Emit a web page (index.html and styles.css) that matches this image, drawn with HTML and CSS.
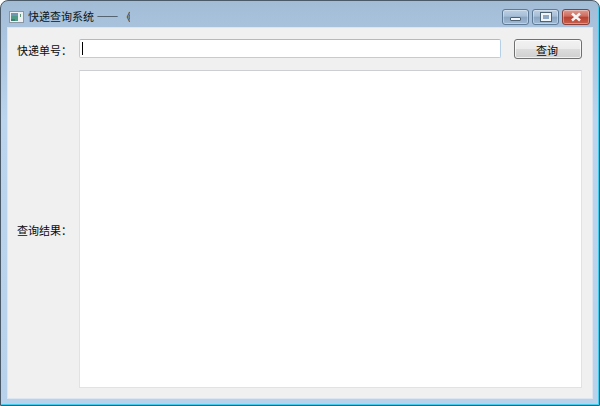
FILE: index.html
```html
<!DOCTYPE html>
<html lang="zh">
<head>
<meta charset="utf-8">
<title>快递查询系统</title>
<link rel="stylesheet" href="styles.css">
</head>
<body>
<div class="window">
  <header class="titlebar">
    <svg class="app-icon" width="15" height="12" viewBox="0 0 15 12">
      <rect x="0.5" y="0.5" width="14" height="11" fill="#eef1f3" stroke="#8a96a2"/>
      <rect x="2" y="2" width="7" height="8" fill="#4f9a86"/>
      <rect x="2" y="2" width="7" height="3" fill="#6f94b4"/>
      <rect x="2" y="8" width="4" height="2" fill="#3c7f70"/>
      <rect x="11" y="3" width="1" height="3" fill="#5f9078"/>
    </svg>
    <div class="title">快递查询系统 —— 《快递查询系统》</div>
    <div class="caption-buttons">
      <div class="cap cap-min"><span class="glyph-min"></span></div>
      <div class="cap cap-max"><span class="glyph-max"></span></div>
      <div class="cap cap-close">
        <svg width="14" height="10" viewBox="0 0 14 10"><path d="M3 1.5 L11 8.5 M11 1.5 L3 8.5" stroke="#f4f4f4" stroke-width="2.6" fill="none"/></svg>
      </div>
    </div>
  </header>
  <main class="client">
    <label class="label">快递单号：</label>
    <div class="input"><span class="caret"></span></div>
    <button class="button">查询</button>
    <label class="label">查询结果：</label>
    <div class="result"></div>
  </main>
</div>
</body>
</html>
```
FILE: styles.css
```css
html, body { margin: 0; padding: 0; }
body { width: 600px; height: 406px; overflow: hidden; background: #fff; font-family: "Noto Sans CJK SC", "Liberation Sans", sans-serif; font-size: 11px; color: #0a0a0a; }
.window {
  box-sizing: border-box; width: 600px; height: 406px;
  display: flex; flex-direction: column;
  border: 1px solid #4a5a68;
  border-radius: 8px 8px 0 0;
  background: linear-gradient(180deg, #a3bcd6 0, #a9c3de 30px, #bcd5ee 120px, #b9d2ec 100%);
  box-shadow: inset -1px -1px 0 #45cdf0;
  padding: 0 7px 7px;
}
.titlebar { height: 27px; flex: none; display: flex; align-items: center; }
.app-icon { margin: 4px 4px 0 1px; flex: none; }
.title { width: 102px; margin-top: 3px; overflow: hidden; white-space: nowrap; color: #0c1520; }
.caption-buttons { margin-left: auto; margin-top: 4px; display: flex; gap: 3px; margin-right: 2px; }
.cap { height: 16px; box-sizing: border-box; border: 1px solid #5d7a96; border-radius: 3px; display: flex; align-items: center; justify-content: center; background: linear-gradient(180deg, #bcd0e4 0, #a5bdd6 45%, #8aa5c2 50%, #a0bad4 100%); box-shadow: inset 0 0 0 1px rgba(255,255,255,.35); }
.cap-min { width: 27px; }
.cap-max { width: 27px; }
.cap-close { width: 28px; border-color: #8a4038; background: linear-gradient(180deg, #dc9a8e 0, #cf6a5c 45%, #b8402f 50%, #c8604e 100%); }
.glyph-min { width: 11px; height: 4px; margin-top: 5px; box-sizing: border-box; background: #f2f5f8; border: 1px solid #4e6276; border-radius: 1px; }
.glyph-max { width: 10px; height: 8px; box-sizing: border-box; background: #8fa9c4; border: 2px solid #f2f5f8; outline: 1px solid #4e6276; }
.client {
  flex: 1; box-sizing: border-box;
  display: grid; grid-template-columns: 62px 422px 13px 68px; grid-template-rows: 20px 318px; row-gap: 11px;
  align-items: center;
  padding: 11px 10px 10px 9px;
  background: #f0f0f0;
  box-shadow: 0 0 0 1px #dce6f0;
}
.label { white-space: nowrap; padding-top: 1px; }
.input { grid-column: 2; height: 19px; align-self: start; box-sizing: border-box; background: #fff; border: 1px solid #b5cfe7; border-top-color: #a9bccd; border-radius: 2px; display: flex; align-items: center; padding-left: 2px; }
.caret { width: 1px; height: 13px; background: #000; }
.button { grid-column: 4; height: 20px; padding: 1px 2px 0 0; box-sizing: border-box; font: inherit; color: #0a0a0a; border: 1px solid #707070; border-radius: 3px; background: linear-gradient(180deg, #f2f2f2 0, #ebebeb 50%, #dddddd 50%, #cfcfcf 100%); box-shadow: inset 0 0 0 1px rgba(255,255,255,.7); }
.result { grid-column: 2 / 5; height: 318px; box-sizing: border-box; background: #fff; border: 1px solid #e0e3e6; border-top-color: #ccced1; }
```
